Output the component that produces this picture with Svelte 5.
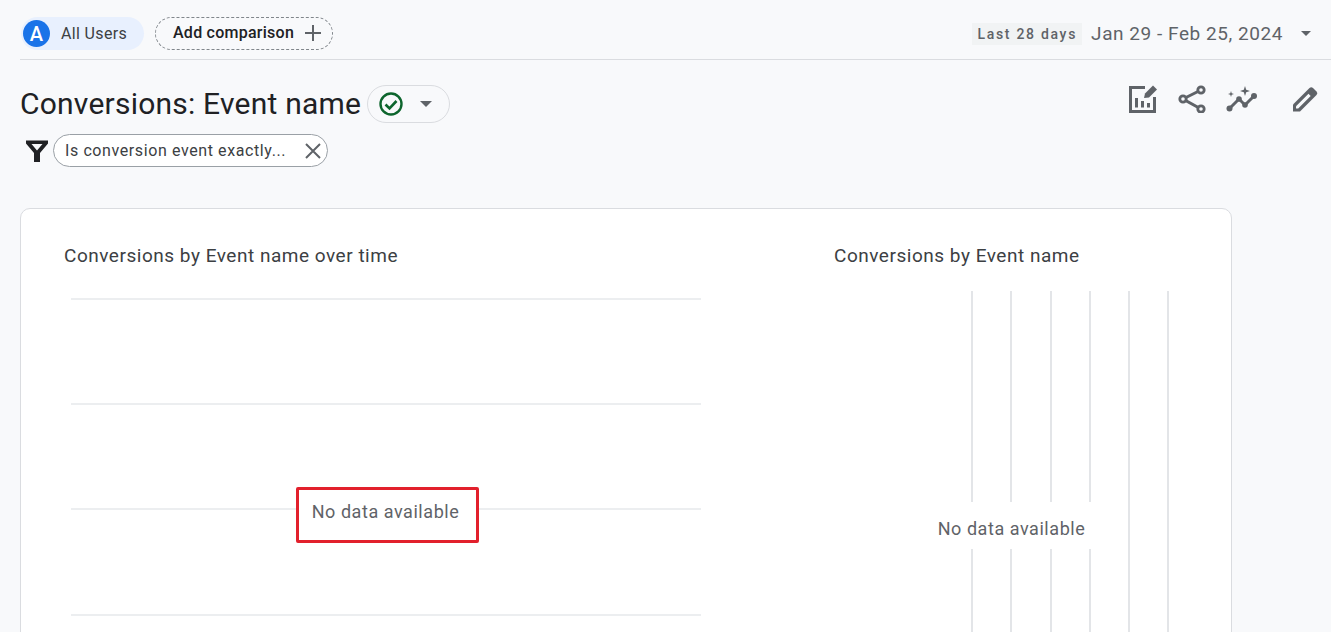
<script lang="ts">
  const gridRows = [0, 1, 2, 3];
  const gridCols = [0, 1, 2, 3, 4, 5];
</script>

<div class="page">
  <header class="topbar">
    <div class="comparisons">
      <div class="chip-users">
        <span class="avatar">A</span>
        <span>All Users</span>
      </div>
      <button class="chip-add">
        <span>Add comparison</span>
        <svg width="18" height="18" viewBox="0 0 18 18"><path d="M9 1v16M1 9h16" stroke="#5f6368" stroke-width="2" fill="none" /></svg>
      </button>
    </div>
    <div class="dates">
      <span class="range-label">Last 28 days</span>
      <span class="range">Jan 29 - Feb 25, 2024</span>
      <svg class="caret" width="10" height="5" viewBox="0 0 10 5"><path d="M0 0h10L5 5z" fill="#5f6368" /></svg>
    </div>
  </header>

  <section class="title-row">
    <div class="title-left">
      <h1>Conversions: Event name</h1>
      <button class="status">
        <svg width="24" height="24" viewBox="0 0 24 24">
          <circle cx="12" cy="12" r="10.500" fill="none" stroke="#0d652d" stroke-width="2.400" />
          <path d="M6.500 12.500l4 4L17.500 9" fill="none" stroke="#0d652d" stroke-width="2.600" />
        </svg>
        <svg width="12" height="6" viewBox="0 0 12 6"><path d="M0 0h12L6 6z" fill="#5f6368" /></svg>
      </button>
    </div>
    <div class="actions">
      <svg width="30" height="30" viewBox="0 0 30 30">
        <path d="M17 3.500H2.500v24h24V13" fill="none" stroke="#5f6368" stroke-width="3" />
        <path d="M8.500 14v9.500M14.500 17v6.500M20.500 19v4.500" stroke="#5f6368" stroke-width="3" fill="none" />
        <path d="M16 14l1-4.500 8-8 4 4-8 8z" fill="#5f6368" />
      </svg>
      <svg width="28" height="28" viewBox="0 0 28 28">
        <path d="M23 5L5 14l18 10" fill="none" stroke="#5f6368" stroke-width="3" />
        <circle cx="23" cy="5" r="3.200" fill="#f8f9fb" stroke="#5f6368" stroke-width="2.800" />
        <circle cx="5" cy="14" r="3.200" fill="#f8f9fb" stroke="#5f6368" stroke-width="2.800" />
        <circle cx="23" cy="24" r="3.200" fill="#f8f9fb" stroke="#5f6368" stroke-width="2.800" />
      </svg>
      <svg width="32" height="28" viewBox="0 0 32 28">
        <path d="M3.500 23.500l9.500-9.500 6 6 9-9" fill="none" stroke="#5f6368" stroke-width="3" />
        <circle cx="3.500" cy="23.500" r="3" fill="#5f6368" />
        <circle cx="13" cy="14" r="2.800" fill="#5f6368" />
        <circle cx="19" cy="20" r="2.800" fill="#5f6368" />
        <circle cx="28" cy="11" r="3" fill="#5f6368" />
        <path d="M19 1l1.200 3.800L24 6l-3.800 1.200L19 11l-1.200-3.800L14 6l3.800-1.200zM5 6l.7 2.300L8 9l-2.300.7L5 12l-.7-2.300L2 9l2.300-.7z" fill="#5f6368" />
      </svg>
      <svg width="28" height="28" viewBox="0 0 28 28">
        <path d="M2 26.500v-7L18.500 3a2.500 2.500 0 0 1 3.500 0l3.500 3.500a2.500 2.500 0 0 1 0 3.500L9 26.500z" fill="#5f6368" />
        <path d="M5 23.500v-2.200L17.500 8.800l2.200 2.200L7.200 23.500z" fill="#f8f9fb" />
      </svg>
    </div>
  </section>

  <div class="filter-row">
    <svg width="24" height="24" viewBox="0 0 24 24">
      <path fill-rule="evenodd" d="M1 1.500h22v3L15 14v9H9V14L1 4.500zM6.500 5l5.500 6.500L17.500 5z" fill="#202124" />
    </svg>
    <div class="filter-chip">
      <span>Is conversion event exactly...</span>
      <svg width="16" height="16" viewBox="0 0 16 16"><path d="M1 1l14 14M15 1L1 15" stroke="#5f6368" stroke-width="2" fill="none" /></svg>
    </div>
  </div>

  <main class="card">
    <div class="chart chart-time">
      <h2>Conversions by Event name over time</h2>
      <div class="plot-h">
        {#each gridRows as row (row)}
          <div class="h-line"></div>
        {/each}
        <div class="no-data boxed">No data available</div>
      </div>
    </div>
    <div class="chart chart-event">
      <h2>Conversions by Event name</h2>
      <div class="plot-v">
        {#each gridCols as col (col)}
          <div class="v-line"></div>
        {/each}
        <div class="no-data plain">No data available</div>
      </div>
    </div>
  </main>
</div>

<style>
  :global(body) {
    margin: 0;
    background: #f8f9fb;
    overflow: hidden;
  }

  .page {
    height: 632px;
    overflow: hidden;
    padding-left: 20px;
    font-family: Roboto, "Liberation Sans", sans-serif;
    color: #202124;
  }

  button {
    font: inherit;
    color: inherit;
    background: none;
    cursor: pointer;
  }

  .topbar {
    display: flex;
    justify-content: space-between;
    align-items: center;
    box-sizing: border-box;
    height: 60px;
    padding: 8px 20px 0 1px;
    border-bottom: 1px solid #dadce0;
    margin-bottom: 25px;
  }

  .comparisons {
    display: flex;
    align-items: center;
    gap: 11px;
  }

  .chip-users {
    display: flex;
    align-items: center;
    gap: 11px;
    box-sizing: border-box;
    width: 123px;
    height: 33px;
    padding-left: 2px;
    border-radius: 17px;
    background: #e8f0fe;
    font-size: 16px;
    letter-spacing: 0.350px;
    color: #3c4043;
  }

  .avatar {
    display: flex;
    align-items: center;
    justify-content: center;
    width: 27px;
    height: 27px;
    border-radius: 50%;
    background: #1a73e8;
    color: #fff;
    font-size: 20px;
    font-weight: 500;
  }

  .chip-add {
    display: flex;
    align-items: center;
    gap: 10px;
    box-sizing: border-box;
    width: 178px;
    height: 33px;
    padding: 0 9px 2px 17px;
    border: 1px dashed #80868b;
    border-radius: 17px;
    font-size: 16px;
    font-weight: 500;
    letter-spacing: 0.250px;
  }

  .dates {
    display: flex;
    align-items: center;
    color: #5f6368;
  }

  .range-label {
    padding: 3px 5px;
    margin-right: 9px;
    background: #f1f3f4;
    font-size: 14px;
    font-weight: 500;
    letter-spacing: 1.700px;
  }

  .range {
    font-size: 19px;
    letter-spacing: 0.550px;
    margin-right: 18px;
  }

  .title-row {
    display: flex;
    justify-content: space-between;
    align-items: flex-start;
    height: 38px;
    padding-right: 12px;
  }

  .title-left {
    display: flex;
    align-items: center;
    gap: 6px;
  }

  h1 {
    margin: 0;
    font-size: 30px;
    font-weight: 400;
    line-height: 38px;
    letter-spacing: 0.220px;
    color: #202124;
  }

  .status {
    display: flex;
    align-items: center;
    gap: 17px;
    box-sizing: border-box;
    width: 83px;
    height: 38px;
    padding: 0 0 0 11px;
    border: 1px solid #dadce0;
    border-radius: 19px;
  }

  .actions {
    display: flex;
    align-items: center;
    height: 28px;
    gap: 20px;
  }

  .actions svg:nth-child(3) {
    margin-right: 13px;
  }

  .filter-row {
    display: flex;
    align-items: center;
    gap: 4px;
    height: 33px;
    margin-top: 11px;
    padding-left: 5px;
  }

  .filter-chip {
    display: flex;
    align-items: center;
    justify-content: space-between;
    box-sizing: border-box;
    width: 275px;
    height: 33px;
    padding: 0 6px 0 11px;
    border: 1px solid #9aa0a6;
    border-radius: 17px;
    background: #fff;
    font-size: 16px;
    letter-spacing: 0.600px;
    color: #3c4043;
  }

  .card {
    display: flex;
    box-sizing: border-box;
    width: 1212px;
    height: 500px;
    margin-top: 41px;
    padding-top: 35px;
    border: 1px solid #dadce0;
    border-radius: 10px;
    background: #fff;
  }

  .chart h2 {
    margin: 0;
    font-size: 19px;
    font-weight: 450;
    line-height: 24px;
    letter-spacing: 0.520px;
    color: #3c4043;
  }

  .chart-time {
    width: 770px;
    padding-left: 43px;
    box-sizing: border-box;
  }

  .plot-h {
    position: relative;
    display: flex;
    flex-direction: column;
    gap: 103.200px;
    width: 630px;
    margin: 30px 0 0 7px;
  }

  .h-line {
    height: 2px;
    background: #eceef0;
  }

  .no-data {
    position: absolute;
    display: flex;
    align-items: center;
    justify-content: center;
    box-sizing: border-box;
    font-size: 18px;
    letter-spacing: 0.550px;
    color: #5f6368;
    background: #fff;
  }

  .boxed {
    left: 225px;
    top: 189px;
    width: 183px;
    height: 56px;
    padding: 0 4px 8px 0;
    border: 3px solid #e2202c;
    border-radius: 2px;
  }

  .chart-event {
    flex: 1;
    padding-left: 43px;
  }

  .plot-v {
    position: relative;
    display: flex;
    gap: 37.300px;
    height: 400px;
    margin: 23px 0 0 137px;
  }

  .v-line {
    width: 2px;
    height: 100%;
    background: #e3e5e8;
  }

  .plain {
    left: -42px;
    top: 211px;
    width: 162px;
    height: 47px;
    padding: 5px 0 0 3px;
  }
</style>
